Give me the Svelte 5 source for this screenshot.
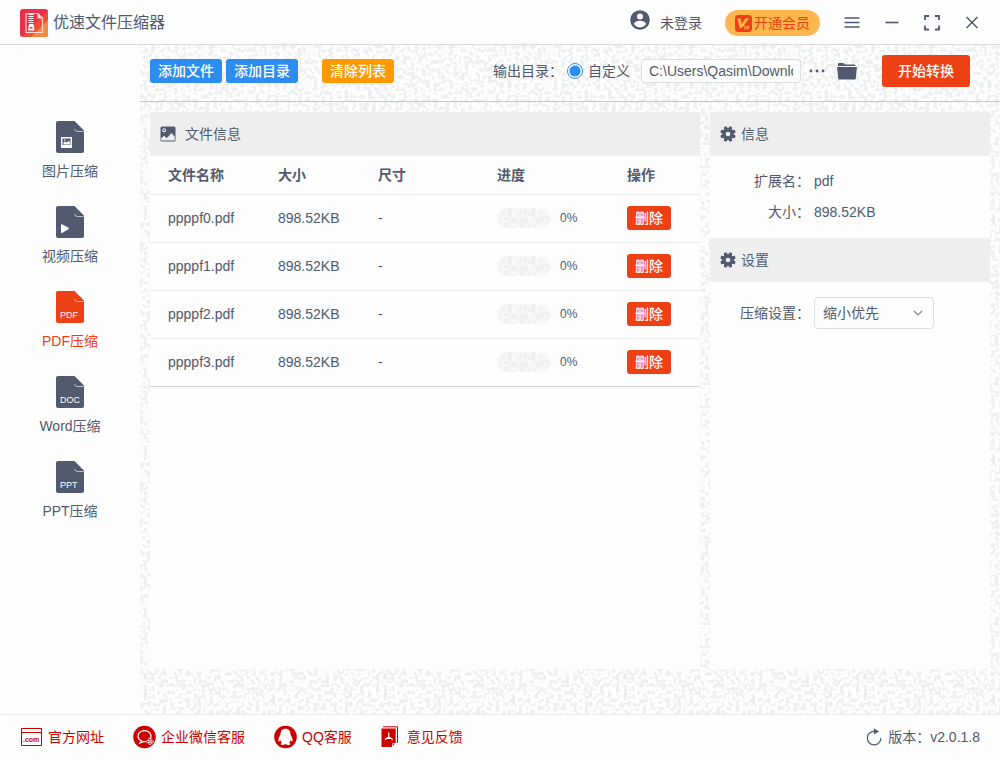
<script>
  const nav = [
    { label: '图片压缩', kind: 'image' },
    { label: '视频压缩', kind: 'video' },
    { label: 'PDF压缩', kind: 'PDF' },
    { label: 'Word压缩', kind: 'DOC' },
    { label: 'PPT压缩', kind: 'PPT' }
  ];
  let active = $state(2);
  let files = $state([0, 1, 2, 3].map((n) => ({ name: `ppppf${n}.pdf`, size: '898.52KB', dim: '-', progress: 0 })));
  let mode = $state('custom');
  let path = $state('C:\\Users\\Qasim\\Downloads');
  let preset = $state('small');
</script>

{#snippet gear()}
  <svg class="gear" width="16" height="16" viewBox="0 0 16 16" aria-hidden="true">
    <g fill="currentColor">
      {#each [22.5, 67.5, 112.5, 157.5] as angle}
        <path d="M6.200 2L6.700 .2H9.300L9.800 2V14L9.300 15.800H6.700L6.200 14z" transform="rotate({angle} 8 8)" />
      {/each}
      <circle cx="8" cy="8" r="5.800" />
    </g>
    <circle cx="8" cy="8" r="2.300" fill="#eeeeee" />
  </svg>
{/snippet}

<div class="app">
  <header class="titlebar">
    <svg class="logo" width="28" height="28" viewBox="0 0 28 28" aria-hidden="true">
      <defs>
        <clipPath id="logo-shape"><rect width="28" height="28" rx="3" /></clipPath>
      </defs>
      <g clip-path="url(#logo-shape)">
        <rect width="28" height="28" fill="#e8304a" />
        <path d="M28 2V28H2z" fill="#ee5033" />
        <path d="M28 11V28H11z" fill="#f58a3c" />
      </g>
      <path d="M6 4.500h12l4.500 4.500v14.500H6z" fill="none" stroke="#fbd5cf" stroke-width="1.200" />
      <path d="M17.500 4.500V9.500H22.500z" fill="#fbd5cf" />
      <path d="M8.500 5.500h5M8.500 7.500h5M8.500 9.500h5M8.500 11.500h5M8.500 13.500h5" stroke="#fff" stroke-width="1.200" />
      <path d="M9 15h4.500l1 6.500H8z" fill="#fff" />
      <rect x="10" y="18" width="2.500" height="1.500" fill="#e8304a" />
    </svg>
    <h1>优速文件压缩器</h1>
    <button class="plain user">
      <svg width="20" height="20" viewBox="0 0 20 20" aria-hidden="true">
        <circle cx="10" cy="10" r="9.800" fill="#515a6e" />
        <circle cx="10" cy="6.500" r="3" fill="#fdfdfd" />
        <path d="M4 14.200c0-2.300 3.800-3.400 6-3.400s6 1.100 6 3.400c-1.300 1.900-3.500 3.100-6 3.100s-4.700-1.200-6-3.100z" fill="#fdfdfd" />
      </svg>
      <span>未登录</span>
    </button>
    <button class="vip">
      <svg width="17" height="17" viewBox="0 0 17 17" aria-hidden="true">
        <rect width="17" height="17" rx="3.500" fill="#ed4014" />
        <path d="M2.500 3.500H5.800L6.500 9 10.800 3.200H14L7 13H4.600z" fill="#ffb74d" />
        <path d="M9.800 10.500v4M12 14.500V11h1a1 1 0 010 2H12" fill="none" stroke="#ffb74d" stroke-width="1" />
      </svg>
      <span>开通会员</span>
    </button>
    <div class="window-tools">
      <button class="plain" aria-label="菜单">
        <svg width="16" height="16" viewBox="0 0 16 16"><path d="M0.500 3h15M0.500 7.500h15M0.500 12h15" stroke="currentColor" stroke-width="1.500" /></svg>
      </button>
      <button class="plain" aria-label="最小化">
        <svg width="16" height="16" viewBox="0 0 16 16"><path d="M1.500 7.500h13" stroke="currentColor" stroke-width="1.600" /></svg>
      </button>
      <button class="plain" aria-label="最大化">
        <svg width="16" height="16" viewBox="0 0 16 16"><path d="M1 5V1h4M11 1H15v4M15 10.500V14.500h-4M5 14.500H1v-4" fill="none" stroke="currentColor" stroke-width="1.800" /></svg>
      </button>
      <button class="plain" aria-label="关闭">
        <svg width="16" height="16" viewBox="0 0 16 16"><path d="M2.500 2l11 11M13.500 2l-11 11" stroke="currentColor" stroke-width="1.500" /></svg>
      </button>
    </div>
  </header>

  <div class="body">
    <nav class="sidebar">
      {#each nav as item, i}
        <button class="plain nav-item" class:active={active === i} onclick={() => (active = i)}>
          <svg width="28" height="32" viewBox="0 0 28 32" aria-hidden="true">
            <path d="M2 0h16.500L28 9.500V30a2 2 0 01-2 2H2a2 2 0 01-2-2V2a2 2 0 012-2z" fill="currentColor" />
            <path d="M18.500 8q.8 2.500 3 2.500H27.500" fill="none" stroke="#fdfdfd" stroke-opacity=".7" stroke-width=".9" />
            {#if item.kind === 'image'}
              <rect x="5" y="16" width="11" height="11" fill="#fdfdfd" />
              <rect x="6.500" y="17.500" width="8" height="6.500" fill="currentColor" />
              <path d="M7.500 23.500v-2l1.500-1 1.500 1 2-1.500 1.500 1v2.500z" fill="#fdfdfd" />
              <rect x="8" y="18.500" width="1.500" height="1" fill="#fdfdfd" />
            {:else if item.kind === 'video'}
              <path d="M5 19q0-1 1-.7l6.500 3.500q.8.700 0 1.400L6 27q-1 .3-1-.7z" fill="#fdfdfd" />
            {:else}
              <text x="4" y="27">{item.kind}</text>
            {/if}
          </svg>
          <span>{item.label}</span>
        </button>
      {/each}
    </nav>

    <main>
      <div class="toolbar">
        <button class="btn blue">添加文件</button>
        <button class="btn blue">添加目录</button>
        <button class="btn orange" onclick={() => (files = [])}>清除列表</button>
        <div class="output">
          <span class="caption">输出目录：</span>
          <label class="radio"><input type="radio" name="dir" value="custom" bind:group={mode} />自定义</label>
          <input class="path" type="text" aria-label="输出目录" bind:value={path} />
          <button class="plain" aria-label="选择目录">
            <svg width="16" height="16" viewBox="0 0 16 16"><g fill="currentColor"><circle cx="2" cy="8" r="1.400" /><circle cx="8" cy="8" r="1.400" /><circle cx="14" cy="8" r="1.400" /></g></svg>
          </button>
          <button class="plain folder" aria-label="打开目录">
            <svg width="20" height="18" viewBox="0 0 20 18"><g fill="currentColor"><path d="M1 4V1.800Q1 1 1.800 1H6.500L8 2.500H17.500Q18.500 2.500 18.500 4z" /><path d="M.8 5H19.200Q20 5 19.900 5.800L18.800 16.500Q18.700 17.500 17.700 17.500H2.300Q1.300 17.500 1.200 16.500L.1 5.800Q0 5 .8 5z" /></g></svg>
          </button>
          <button class="btn start">开始转换</button>
        </div>
      </div>

      <div class="panels">
        <section class="panel list">
          <h2 class="wide">
            <svg width="16" height="16" viewBox="0 0 16 16" aria-hidden="true">
              <rect x=".5" y=".5" width="15" height="15" rx="1.500" fill="#515a6e" />
              <circle cx="4.200" cy="4.200" r="1.400" fill="none" stroke="#eee" stroke-width="1.100" />
              <path d="M1.200 14.500v-2.200l3-2.500 2.500 2.500L11.500 7l3.200 3.500v4z" fill="#eee" />
            </svg>
            文件信息
          </h2>
          <table>
            <colgroup><col class="c-name" /><col class="c-size" /><col class="c-dim" /><col class="c-prog" /><col /></colgroup>
            <thead>
              <tr><th>文件名称</th><th>大小</th><th>尺寸</th><th>进度</th><th>操作</th></tr>
            </thead>
            <tbody>
              {#each files as file}
                <tr>
                  <td>{file.name}</td>
                  <td>{file.size}</td>
                  <td>{file.dim}</td>
                  <td>
                    <div class="progress">
                      <div class="track" role="progressbar" aria-label={file.name} aria-valuenow={file.progress}>
                        <div class="fill" style="width: {file.progress}%"></div>
                      </div>
                      <span>{file.progress}%</span>
                    </div>
                  </td>
                  <td><button class="btn delete" onclick={() => (files = files.filter((f) => f !== file))}>删除</button></td>
                </tr>
              {/each}
            </tbody>
          </table>
        </section>

        <aside class="panel side">
          <h2>{@render gear()}信息</h2>
          <dl>
            <dt>扩展名：</dt><dd>pdf</dd>
            <dt>大小：</dt><dd>898.52KB</dd>
          </dl>
          <h2>{@render gear()}设置</h2>
          <div class="setting">
            <label for="preset">压缩设置：</label>
            <div class="select">
              <select id="preset" bind:value={preset}>
                <option value="small">缩小优先</option>
                <option value="clear">清晰优先</option>
              </select>
              <svg width="10" height="10" viewBox="0 0 10 10" aria-hidden="true"><path d="M1 3l4 4 4-4" fill="none" stroke="#808695" stroke-width="1.200" /></svg>
            </div>
          </div>
        </aside>
      </div>
    </main>
  </div>

  <footer>
    <a href="#site">
      <svg width="23" height="18" viewBox="0 0 23 18" aria-hidden="true">
        <path d="M1.500 .5h20v17h-20zM1.500 4.500h20" fill="none" stroke="#c00" stroke-width="1" />
        <text class="com" x="3" y="14">.com</text>
      </svg>
      官方网址
    </a>
    <a href="#wecom">
      <svg width="23" height="24" viewBox="0 0 24 24" aria-hidden="true">
        <circle cx="12" cy="12" r="11.800" fill="#c00" />
        <path d="M17.500 14.500A6.800 5.700 0 109 16.200L7.500 18.200 11.500 16.700Q13 16.900 14.500 16.400" fill="none" stroke="#fff" stroke-width="1.300" />
        <g fill="#c00" stroke="#fff" stroke-width=".9"><circle cx="17.500" cy="14.500" r="1.300" /><circle cx="20" cy="16.800" r="1.300" /><circle cx="15.500" cy="16.800" r="1.300" /><circle cx="17.800" cy="18.500" r="1.300" /></g>
      </svg>
      企业微信客服
    </a>
    <a href="#qq">
      <svg width="23" height="24" viewBox="0 0 24 24" aria-hidden="true">
        <circle cx="12" cy="12" r="11.800" fill="#c00" />
        <path d="M12 3.500c-3.500 0-5.300 2.500-5.200 5.900C6 11 4.600 13 4.600 15.600c0 1.500 1 1.400 2-.1.300 1 .8 1.800 1.500 2.500-1.800.8-1.300 2.300.5 2.300 1.400 0 2.600-.4 3.400-1 .8.600 2 1 3.400 1 1.800 0 2.300-1.500.5-2.300.7-.7 1.200-1.500 1.500-2.500 1 1.500 2 1.600 2 .1 0-2.600-1.400-4.600-2.200-6.200C17.300 6 15.500 3.500 12 3.500z" fill="#fff" />
      </svg>
      QQ客服
    </a>
    <a href="#feedback" class="feedback">
      <svg width="18" height="22" viewBox="0 0 18 22" aria-hidden="true">
        <path d="M2 .8H16.500V17" fill="none" stroke="#c00" stroke-width="1" />
        <path d="M.5 2.500H14.700V16.500L10.500 21H.5z" fill="#c00" />
        <path d="M11.500 20.500V17.500H14.500z" fill="#c00" stroke="#fff" stroke-width=".7" />
        <path d="M7.700 6.500V11L3.800 13.800M7.700 11L11.700 13.500M6.200 12.300h3" fill="none" stroke="#fff" stroke-width="1.200" />
      </svg>
      意见反馈
    </a>
    <button class="plain version">
      <svg width="16" height="18" viewBox="0 0 16 18" aria-hidden="true">
        <path d="M8.500 3.300A6.800 6.800 0 1014.900 10" fill="none" stroke="#515a6e" stroke-width="1.200" />
        <path d="M8 .3L13 3.400 8 6.500z" fill="#515a6e" />
      </svg>
      <span>版本：v2.0.1.8</span>
    </button>
  </footer>
</div>

<style>
  :global(body) { background: #fdfdfd; }
  .app {
    --speckle: url("data:image/svg+xml,%3Csvg xmlns='http://www.w3.org/2000/svg' width='240' height='240'%3E%3Cfilter id='n' x='0' y='0' width='100%25' height='100%25' color-interpolation-filters='sRGB'%3E%3CfeTurbulence type='fractalNoise' baseFrequency='.26' numOctaves='1' seed='4' stitchTiles='stitch'/%3E%3CfeColorMatrix values='0 0 0 0 .929 0 0 0 0 .937 0 0 0 0 .945 14 0 0 0 -6.9'/%3E%3C/filter%3E%3Crect width='240' height='240' filter='url(%23n)'/%3E%3C/svg%3E");
    display: flex;
    flex-direction: column;
    min-height: 100vh;
    color: #515a6e;
    font: 14px/20px "Liberation Sans", "Noto Sans CJK SC", sans-serif;
  }
  .app, .app * { box-sizing: border-box; }
  svg { display: block; flex: none; }
  button, input, select { font: inherit; color: inherit; }
  button { cursor: pointer; white-space: nowrap; }
  h1, h2, dl, dd { margin: 0; font-weight: 400; }

  .plain {
    display: flex;
    align-items: center;
    justify-content: center;
    padding: 0;
    border: 0;
    background: none;
  }
  .titlebar {
    display: flex;
    align-items: center;
    height: 45px;
    padding: 2px 8px 0 20px;
    border-bottom: 1px solid #dcdcdc;
  }
  h1 { margin: 0 auto 0 5px; font-size: 16px; line-height: 24px; }
  .user { gap: 10px; margin-right: 23px; }
  .user svg { margin-bottom: 6px; }
  .vip {
    display: flex;
    align-items: center;
    gap: 2px;
    height: 26px;
    margin-right: 12px;
    padding: 0 10px;
    border: 0;
    border-radius: 13px;
    background: #ffb74d;
    color: #ed4014;
  }
  .window-tools { display: flex; }
  .window-tools button { width: 40px; height: 40px; }

  .body { display: flex; flex: 1; }
  .sidebar {
    display: flex;
    flex: none;
    flex-direction: column;
    align-items: center;
    gap: 25px;
    width: 140px;
    padding-top: 76px;
  }
  .nav-item { flex-direction: column; gap: 8px; }
  .nav-item text { fill: #fdfdfd; font: 9px "Liberation Sans", sans-serif; }
  .nav-item.active { color: #ed4014; }

  main {
    display: flex;
    flex: 1;
    flex-direction: column;
    min-width: 0;
    background: #fdfdfd var(--speckle);
  }
  .toolbar {
    display: flex;
    align-items: center;
    gap: 4px;
    padding: 10px 30px 14px 10px;
    border-bottom: 1px solid #c8c8c8;
  }
  .btn {
    height: 24px;
    padding: 0 7px;
    border: 1px solid transparent;
    border-radius: 3px;
    color: #fff;
    font-weight: 500;
    line-height: 20px;
  }
  .blue { background: #2d8cf0; }
  .orange { margin-left: 20px; background: #f90; }
  .delete { display: block; background: #ed4014; }
  .start { height: 32px; margin-left: 25px; padding: 0 15px; background: #ed4014; }
  .output { display: flex; align-items: center; margin-left: auto; }
  .radio { display: flex; align-items: center; gap: 5px; margin: 0 11px 0 4px; }
  .radio input {
    appearance: none;
    width: 16px;
    height: 16px;
    margin: 0;
    border: 1px solid #2d8cf0;
    border-radius: 50%;
    background: #fff;
  }
  .radio input:checked { background: radial-gradient(circle, #2d8cf0 5px, #fff 6px); }
  .path {
    width: 160px;
    height: 24px;
    margin-right: 8px;
    padding: 0 7px;
    border: 1px solid #dcdee2;
    border-radius: 3px;
    background: #fdfdfd;
  }
  .folder { margin-left: 12px; }

  .panels {
    display: grid;
    flex: 1;
    grid-template-columns: minmax(0, 1fr) 280px;
    gap: 10px;
    padding: 10px 10px 45px;
  }
  .panel { background: #fdfdfd; }
  h2 {
    display: flex;
    align-items: center;
    gap: 5px;
    height: 44px;
    padding: 0 10px;
    background: #eee;
    font-size: 14px;
  }
  h2.wide { gap: 9px; }

  table { width: 100%; border-collapse: separate; border-spacing: 0; table-layout: fixed; }
  .c-name { width: 110px; }
  .c-size { width: 100px; }
  .c-dim { width: 119px; }
  .c-prog { width: 130px; }
  th, td { padding: 0 0 0 18px; border-bottom: 1px solid #e8eaec; text-align: left; }
  th { height: 39px; font-weight: 700; }
  td { height: 48px; padding-bottom: 1px; }
  tbody tr:last-child td { border-color: #d2d4d8; }
  .progress { display: flex; align-items: center; gap: 9px; font-size: 12px; }
  .track {
    width: 54px;
    height: 20px;
    overflow: hidden;
    border-radius: 10px;
    background: #f6f7f8 var(--speckle);
  }
  .fill { height: 100%; background: #2d8cf0; }

  dl {
    display: grid;
    grid-template-columns: 100px 1fr;
    gap: 11px 4px;
    padding: 15px 0 16px;
  }
  dt { text-align: right; }
  .setting { display: grid; grid-template-columns: 100px 120px; align-items: center; gap: 4px; padding-top: 15px; }
  .setting label { text-align: right; }
  .select { position: relative; }
  .select select {
    appearance: none;
    width: 100%;
    height: 32px;
    padding: 0 24px 0 8px;
    border: 1px solid #dcdee2;
    border-radius: 4px;
    background: #fdfdfd;
  }
  .select svg { position: absolute; top: 11px; right: 11px; pointer-events: none; }

  footer {
    display: flex;
    align-items: center;
    gap: 29px;
    height: 46px;
    padding: 0 20px 2px;
    border-top: 1px solid #e8eaec;
  }
  footer a { display: flex; align-items: center; gap: 5px; color: #c00; text-decoration: none; white-space: nowrap; }
  footer .feedback { gap: 8px; }
  .com { fill: #c00; font: bold 7px "Liberation Sans", sans-serif; }
  .version { gap: 6px; margin-left: auto; }
</style>
